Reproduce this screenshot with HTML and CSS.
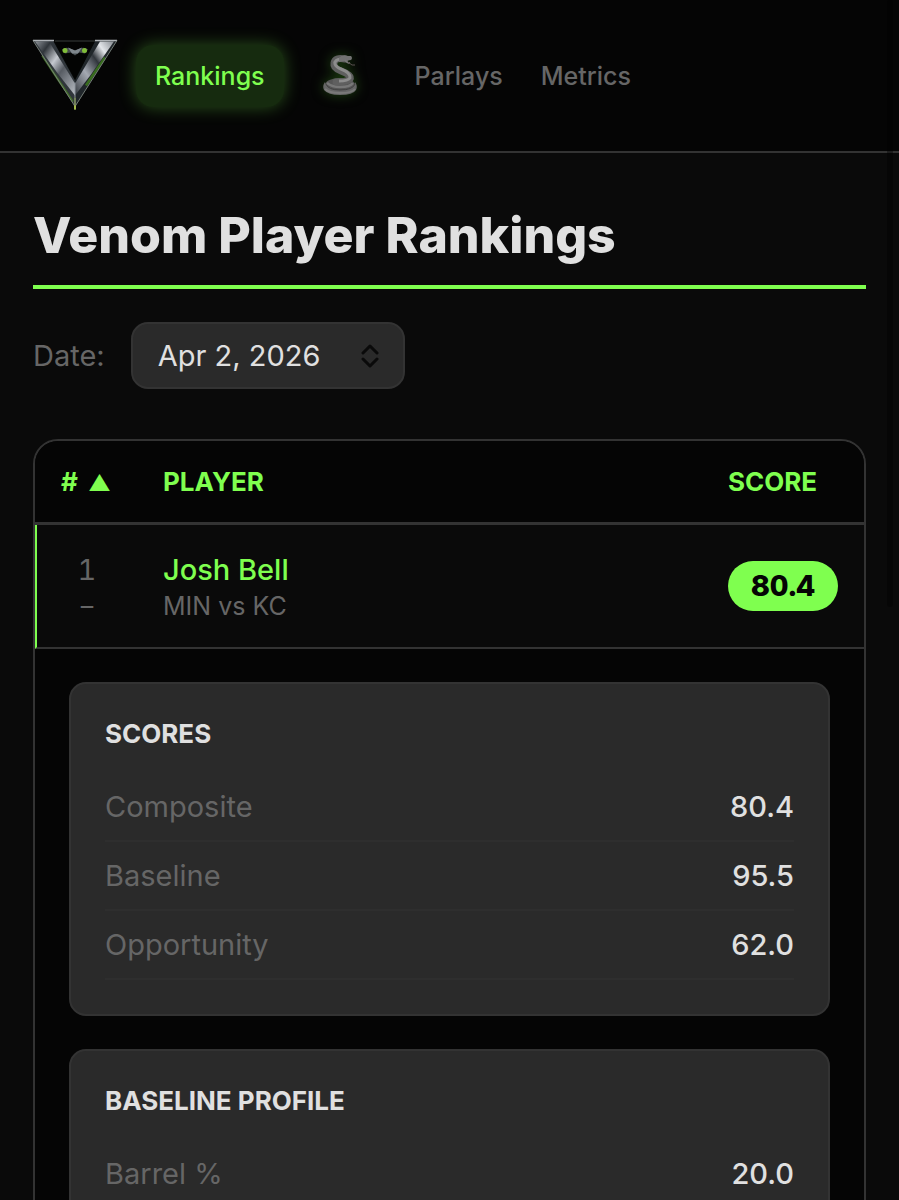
FILE: index.html
```html
<!DOCTYPE html>
<html lang="en">
<head>
<meta charset="utf-8">
<meta name="viewport" content="width=device-width, initial-scale=1">
<title>Venom Player Rankings</title>
<link rel="stylesheet" href="styles.css">
</head>
<body>
<header class="topbar">
  <a class="brand" href="#" aria-label="Venom home">
    <svg class="logo" viewBox="0 0 88 72" aria-hidden="true">
      <defs>
        <linearGradient id="steelL" x1="0" y1="0" x2="1" y2="1">
          <stop offset="0" stop-color="#8d9298"/><stop offset=".2" stop-color="#30353a"/>
          <stop offset=".42" stop-color="#c5c9cf"/><stop offset=".6" stop-color="#565b62"/>
          <stop offset="1" stop-color="#b9bec5"/>
        </linearGradient>
        <linearGradient id="steelR" x1="1" y1="0" x2="0" y2="1">
          <stop offset="0" stop-color="#858a90"/><stop offset=".22" stop-color="#e3e6ea"/>
          <stop offset=".4" stop-color="#30353b"/><stop offset=".65" stop-color="#a4a9b2"/>
          <stop offset="1" stop-color="#33383e"/>
        </linearGradient>
      </defs>
      <path d="M2 1L44 68L86 1Z" fill="#0b0e0c"/>
      <path d="M2 1H22L44 41V67Z" fill="#30363b"/>
      <path d="M4 2H18L44 44V56L26 33Z" fill="url(#steelL)"/>
      <path d="M86 1H64L44 41V67Z" fill="#20262a"/>
      <path d="M83 2H69L44 44V56L60 35Z" fill="url(#steelR)"/>
      <path d="M11 16L26 38L42 62L28 42Z" fill="#4d8a28" stroke="#416f25" stroke-width="1.500"/>
      <path d="M74 18L63 34L55 46" stroke="#386c1e" stroke-width="2.500" fill="none"/>
      <path d="M23 2H64L44 40Z" fill="#030403"/>
      <path d="M2 1H23M64 1H86" stroke="#aeb2b6" stroke-width="1.400"/>
      <path d="M2 1L44 67L86 1" fill="none" stroke="#747c77" stroke-width="1"/>
      <path d="M44 43V58" stroke="#8d949c" stroke-width="1"/>
      <path d="M24 1.500H64" stroke="#343936" stroke-width="1"/>
      <path d="M31 10Q35 7 39 9L44 11L49 9Q53 7 57 10L54 14L48 13L44 16L40 13L34 14Z" fill="#444b4e"/>
      <path d="M37 8L44 11L51 8L47 14H41Z" fill="#7f878c"/>
      <circle cx="34" cy="11" r="2.500" fill="#80bd38"/>
      <circle cx="53.500" cy="11" r="2.500" fill="#80bd38"/>
      <path d="M44 58V70" stroke="#8a9a68" stroke-width="1.500"/>
      <path d="M44 66V70" stroke="#a4b94b" stroke-width="2"/>
    </svg>
  </a>
  <nav class="nav" aria-label="Main">
    <a class="nav-link active" href="#" aria-current="page">Rankings</a>
    <a class="nav-link snake-link" href="#" aria-label="Snake">
      <svg class="snake" viewBox="0 0 42 46" aria-hidden="true">
        <ellipse cx="21" cy="32" rx="15" ry="7" fill="#555"/>
        <path d="M6 29Q3 33 5 37Q9 42 21 42Q34 42 37 37Q39 33 36 29Q36 36 21 37Q7 36 6 29Z" fill="#666"/>
        <path d="M7 31Q9 37 21 37Q34 37 36 31" fill="none" stroke="#404040" stroke-width="1"/>
        <path d="M6 36Q10 40 21 40Q33 40 36 36" fill="none" stroke="#797979" stroke-width="2"/>
        <path d="M8 30Q13 34 21 34Q31 34 34 30" fill="none" stroke="#777" stroke-width="2.500"/>
        <path d="M26 6Q16 4 15 10Q14 15 22 18Q33 22 31 26Q28 29 17 29" fill="none" stroke="#5f5f5f" stroke-width="7" stroke-linecap="round"/>
        <path d="M22 6Q15 7 16 11Q17 14 22 16Q32 20 31 25Q29 28 20 28" fill="none" stroke="#8c8c8c" stroke-width="3"/>
        <path d="M20 5Q23 1 29 3L32 3Q34 5 32 7L26 8L20 9Z" fill="#727272"/>
        <path d="M26 7Q28 10 31 10" fill="none" stroke="#777" stroke-width="1.500"/>
        <path d="M29 9L33 12H36" fill="none" stroke="#5a5050" stroke-width="1"/>
      </svg>
    </a>
    <a class="nav-link" href="#">Parlays</a>
    <a class="nav-link" href="#">Metrics</a>
  </nav>
</header>

<main class="page">
  <h1 class="title">Venom Player Rankings</h1>

  <div class="filter">
    <label class="filter-label" for="date">Date:</label>
    <div class="select-wrap">
      <select class="select" id="date"><option>Apr 2, 2026</option></select>
      <svg class="chevrons" viewBox="0 0 18 24" aria-hidden="true">
        <path d="M2 9L9 2L16 9M2 15L9 22L16 15"/>
      </svg>
    </div>
  </div>

  <div class="table-frame">
    <table class="rankings">
      <thead>
        <tr>
          <th class="col-rank" scope="col"># <span class="sort">▲</span></th>
          <th scope="col">Player</th>
          <th class="col-score" scope="col">Score</th>
        </tr>
      </thead>
      <tbody>
        <tr class="player-row">
          <td class="rank"><div class="rank-value">1</div><div class="rank-change">–</div></td>
          <td><a class="player-name" href="#">Josh Bell</a><div class="matchup">MIN vs KC</div></td>
          <td class="score"><span class="badge">80.4</span></td>
        </tr>
        <tr>
          <td class="details" colspan="3">
            <div class="cards">
              <section class="card">
                <h2 class="card-title">Scores</h2>
                <dl class="stats">
                  <div class="stat"><dt>Composite</dt><dd>80.4</dd></div>
                  <div class="stat"><dt>Baseline</dt><dd>95.5</dd></div>
                  <div class="stat"><dt>Opportunity</dt><dd>62.0</dd></div>
                </dl>
              </section>
              <section class="card">
                <h2 class="card-title">Baseline Profile</h2>
                <dl class="stats">
                  <div class="stat"><dt>Barrel %</dt><dd>20.0</dd></div>
                </dl>
              </section>
            </div>
          </td>
        </tr>
      </tbody>
    </table>
  </div>
</main>
<div class="scroll-thumb" aria-hidden="true"></div>
</body>
</html>
```

FILE: styles.css
```css
:root {
  --bg: #0a0a0a;
  --bg-deep: #050505;
  --panel: #2a2a2a;
  --line: #333;
  --text: #e0e0e0;
  --muted: #666;
  --green: #7fff4f;
}

* { box-sizing: border-box; }

html { scrollbar-width: none; background: var(--bg); }

body {
  margin: 0;
  background: var(--bg);
  color: var(--text);
  font-family: Inter, "Liberation Sans", sans-serif;
  font-size: 29px;
  line-height: 36px;
}

a { color: inherit; text-decoration: none; }

.topbar {
  display: flex;
  align-items: flex-start;
  gap: 17px;
  padding: 39px 31px;
  background: var(--bg-deep);
  border-bottom: 2px solid var(--line);
}

.brand { display: block; }
.logo { display: block; width: 88px; height: 73px; }

.nav { display: flex; align-items: center; padding-top: 6px; }

.nav-link {
  padding: 13px 19px;
  border-radius: 17px;
  color: var(--muted);
  font-size: 25px;
  font-weight: 500;
}

.nav-link.active {
  color: var(--green);
  background: #162b0f;
  box-shadow: 0 0 17px #7fff4f4d;
}

.snake-link { padding: 7px 35px; }

.snake {
  display: block;
  width: 42px;
  height: 46px;
  filter: drop-shadow(0 0 6px #1d4210);
}

.page { padding: 52px 33px 33px; }

.title {
  margin: 0;
  padding-bottom: 20px;
  border-bottom: 4px solid var(--green);
  font-size: 50px;
  line-height: 60px;
  font-weight: 800;
}

.filter {
  display: flex;
  align-items: center;
  gap: 26px;
  margin: 33px 0 50px;
}

.filter-label { color: var(--muted); }

.select-wrap { display: grid; align-items: center; }

.select {
  grid-area: 1 / 1;
  appearance: none;
  width: 274px;
  height: 67px;
  padding: 0 70px 0 25px;
  border: 2px solid var(--line);
  border-radius: 17px;
  background: var(--panel);
  color: var(--text);
  font: inherit;
}

.chevrons {
  grid-area: 1 / 1;
  justify-self: end;
  width: 18px;
  height: 24px;
  margin-right: 26px;
  fill: none;
  stroke: #0a0a0a;
  stroke-width: 3;
  stroke-linecap: round;
  stroke-linejoin: round;
  pointer-events: none;
}

.table-frame {
  overflow: hidden;
  border: 2px solid var(--line);
  border-radius: 25px;
}

.rankings {
  width: 100%;
  border-spacing: 0;
  background: var(--bg-deep);
}

.rankings th {
  padding: 23px 26px 22px;
  border-bottom: 3px solid var(--line);
  color: var(--green);
  font-size: 26px;
  font-weight: 700;
  text-align: left;
  text-transform: uppercase;
  white-space: nowrap;
}

.rankings .col-rank { width: 102px; padding-right: 0; }
.col-score { width: 162px; }
.sort { margin-left: 4px; font-size: 22px; line-height: 22px; }

.player-row td {
  padding: 26px 26px 23px;
  border-bottom: 2px solid var(--line);
  background: var(--bg);
}

.player-row .rank {
  padding: 26px 0 23px;
  border-left: 2px solid var(--green);
  color: var(--muted);
  text-align: center;
  font-variant-numeric: tabular-nums;
}

.player-row .score { padding: 24px 26px 25px; }

.rank-value, .player-name { line-height: 37px; }
.rank-change, .matchup { font-size: 25px; }
.matchup { color: var(--muted); }
.player-name { display: block; color: var(--green); font-weight: 500; }

.badge {
  display: block;
  padding: 7px 0;
  border-radius: 25px;
  background: var(--green);
  color: var(--bg-deep);
  font-weight: 800;
  font-variant-numeric: tabular-nums;
  text-align: center;
}

.details { padding: 33px 34px; }
.cards { display: grid; gap: 33px; }

.card {
  padding: 32px 34px 34px;
  border: 2px solid var(--line);
  border-radius: 17px;
  background: var(--panel);
}

.card-title {
  margin: 0 0 21px;
  font-size: 26px;
  font-weight: 700;
  text-transform: uppercase;
}

.stats { margin: 0; }

.stat {
  display: flex;
  justify-content: space-between;
  padding: 16px 0 15px;
  border-bottom: 2px solid #2e2e2e;
}

.stat dt { color: var(--muted); }
.stat dd { margin: 0; font-weight: 500; }

.scroll-thumb {
  position: fixed;
  top: 0;
  right: 6px;
  width: 6px;
  height: 607px;
  border-radius: 3px;
  background: #0006;
}
```
